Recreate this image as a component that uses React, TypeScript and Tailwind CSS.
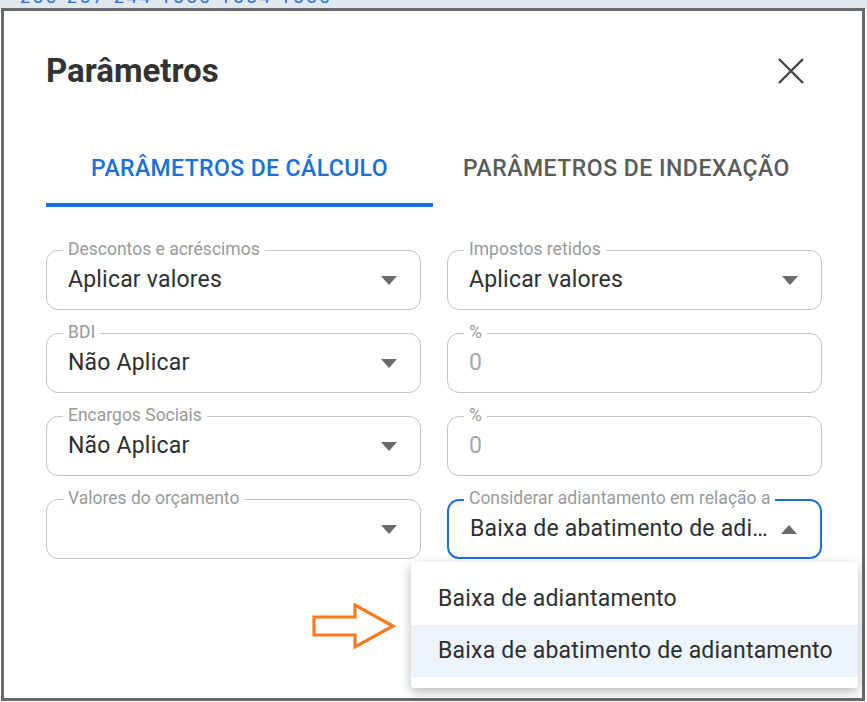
import React from "react";

const font = { fontFamily: "Roboto, 'Noto Sans', Arial, sans-serif" };

function Caret({ up = false }: { up?: boolean }) {
  return (
    <svg width="16" height="9" viewBox="0 0 16 9" className="shrink-0">
      {up ? <path d="M0 9 L8 0 L16 9 Z" fill="#6b6b6b" /> : <path d="M0 0 L16 0 L8 9 Z" fill="#6b6b6b" />}
    </svg>
  );
}

function Field({
  label,
  value,
  placeholder,
  select = true,
  focused = false,
  open = false,
}: {
  label: string;
  value?: string;
  placeholder?: string;
  select?: boolean;
  focused?: boolean;
  open?: boolean;
}) {
  return (
    <div className="relative h-[60px]">
      <div
        className={
          "h-full rounded-[12px] flex items-center pl-[21px] pr-[23px] " +
          (focused ? "border-2 border-[#1b6fd8]" : "border border-[#c4c4c4]")
        }
      >
        <div className="flex-1 min-w-0 truncate text-[23px] tracking-[0.2px] text-[#2f2f2f] pr-[12px]">
          {value ?? <span className="text-[#a8a8a8]">{placeholder}</span>}
        </div>
        {select && <Caret up={open} />}
      </div>
      <span className="absolute left-[17px] -top-[12px] bg-white px-[5px] text-[17.5px] leading-[22px] text-[#9a9a9a]">
        {label}
      </span>
    </div>
  );
}

export default function App() {
  return (
    <div className="w-[867px] h-[702px] bg-white relative overflow-hidden" style={font}>
      {/* background page strip */}
      <div className="h-[9px] bg-[#dfe7ef] overflow-hidden px-[20px]">
        <div className="-mt-[17px] text-[18px] text-[#2d6fd6] tracking-[3px] whitespace-nowrap">
          283 287 244 1883 1884 1883
        </div>
      </div>

      {/* dialog */}
      <div className="absolute left-[1px] top-[8px] w-[864px] h-[693px] border-[3px] border-[#666a6e] bg-white">
        <div className="px-[42px]">
          <div className="flex items-center justify-between h-[119px] pt-[1px]">
            <h1 className="text-[33px] font-bold text-[#333333]">Parâmetros</h1>
            <svg width="28" height="28" viewBox="0 0 28 28" className="mr-[15px]">
              <path d="M2 2 L26 26 M26 2 L2 26" stroke="#444" strokeWidth="2.4" />
            </svg>
          </div>

          {/* tabs */}
          <div className="flex h-[77px]">
            <div className="w-[389px] flex flex-col">
              <div className="flex-1 flex items-center justify-center pt-[6px] text-[23px] font-medium text-[#1b6fd8] tracking-[0.4px]">
                PARÂMETROS DE CÁLCULO
              </div>
              <div className="h-[4px] bg-[#1b6fd8]" />
            </div>
            <div className="w-[389px] flex items-center justify-center pt-[2px] text-[23px] font-medium text-[#5b5b5b] tracking-[0.5px]">
              PARÂMETROS DE INDEXAÇÃO
            </div>
          </div>

          {/* fields */}
          <div className="grid grid-cols-2 gap-x-[26px] gap-y-[23px] pt-[43px] w-[776px]">
            <Field label="Descontos e acréscimos" value="Aplicar valores" />
            <Field label="Impostos retidos" value="Aplicar valores" />
            <Field label="BDI" value="Não Aplicar" />
            <Field label="%" placeholder="0" select={false} />
            <Field label="Encargos Sociais" value="Não Aplicar" />
            <Field label="%" placeholder="0" select={false} />
            <Field label="Valores do orçamento" value="" />
            <Field
              label="Considerar adiantamento em relação a"
              value="Baixa de abatimento de adiantamento"
              focused
              open
            />
          </div>
        </div>

        {/* dropdown menu */}
        <div className="absolute left-[407px] top-[551px] w-[447px] bg-white rounded-[3px] shadow-[0_4px_12px_rgba(0,0,0,0.28)] pt-[11px] pb-[11px]">
          <div className="h-[52px] flex items-center pl-[27px] pr-[8px] whitespace-nowrap text-[23px] tracking-[0.2px] text-[#2f2f2f]">
            Baixa de adiantamento
          </div>
          <div className="h-[52px] flex items-center pl-[27px] pr-[8px] whitespace-nowrap text-[23px] tracking-[0.2px] text-[#2f2f2f] bg-[#edf3fb]">
            Baixa de abatimento de adiantamento
          </div>
        </div>

        {/* annotation arrow */}
        <svg width="86" height="46" viewBox="0 0 86 46" className="absolute left-[307px] top-[592px]">
          <path
            d="M3 14 L44 14 L44 2 L82 23 L44 44 L44 32 L3 32 Z"
            fill="none"
            stroke="#ff7a1f"
            strokeWidth="3.2"
            strokeLinejoin="miter"
          />
        </svg>
      </div>
    </div>
  );
}
